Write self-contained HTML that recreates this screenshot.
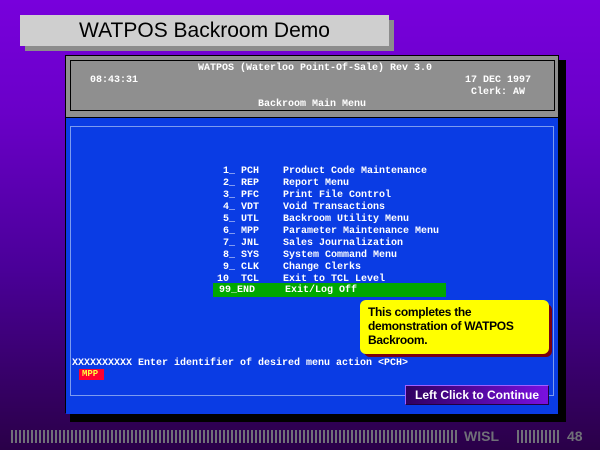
<!DOCTYPE html>
<html><head><style>
*{margin:0;padding:0}
body{width:600px;height:450px;overflow:hidden;position:relative;background:linear-gradient(#7800dc 0%,#6a00c8 25%,#4a0098 60%,#2a0048 100%);font-family:"Liberation Sans",sans-serif}
.a{position:absolute}
.m{font-family:"Liberation Mono",monospace;font-weight:bold;font-size:10px;color:#fff;white-space:pre;line-height:12px}
.bars{background:repeating-linear-gradient(90deg,#707078 0 2px,transparent 2px 4px)}
</style></head><body>
<div class="a" style="left:25px;top:20px;width:369px;height:31px;background:#8c8c8c"></div>
<div class="a" style="left:20px;top:15px;width:369px;height:31px;background:#cfcfcf;font-size:21px;line-height:31px;text-align:center;color:#000">WATPOS Backroom Demo</div>

<div class="a" style="left:70px;top:60px;width:496px;height:362px;background:#000"></div>
<div class="a" style="left:65px;top:55px;width:494px;height:358px;background:#000"></div>
<div class="a" style="left:66px;top:56px;width:492px;height:61px;background:#8f8f8f"></div>
<div class="a" style="left:70px;top:60px;width:483px;height:49px;border:1px solid #000"></div>
<div class="a" style="left:66px;top:118px;width:492px;height:296px;background:#0a3ce4"></div>
<div class="a" style="left:70px;top:126px;width:482px;height:268px;border:1px solid #7c9cf0"></div>

<div class="a m" style="left:198px;top:63px">WATPOS (Waterloo Point-Of-Sale) Rev 3.0</div>
<div class="a m" style="left:90px;top:75px">08:43:31</div>
<div class="a m" style="left:465px;top:75px">17 DEC 1997</div>
<div class="a m" style="left:471px;top:87px">Clerk: AW</div>
<div class="a m" style="left:258px;top:99px">Backroom Main Menu</div>

<div class="a" style="left:213px;top:283px;width:233px;height:14px;background:#00a800"></div>
<div class="a m" style="left:217px;top:166px"> 1_ PCH    Product Code Maintenance
 2_ REP    Report Menu
 3_ PFC    Print File Control
 4_ VDT    Void Transactions
 5_ UTL    Backroom Utility Menu
 6_ MPP    Parameter Maintenance Menu
 7_ JNL    Sales Journalization
 8_ SYS    System Command Menu
 9_ CLK    Change Clerks
10  TCL    Exit to TCL Level
</div>
<div class="a m" style="left:219px;top:285px">99_END     Exit/Log Off</div>

<div class="a" style="left:364px;top:304px;width:188px;height:53px;background:#7a0010;border-radius:6px"></div>
<div class="a" style="left:360px;top:300px;width:189px;height:54px;background:#ffff00;border-radius:6px;font-size:12px;font-weight:bold;line-height:14px;color:#000;padding:5px 0 0 8px;box-sizing:border-box;letter-spacing:-0.3px">This completes the<br>demonstration of WATPOS<br>Backroom.</div>

<div class="a m" style="left:72px;top:358px">XXXXXXXXXX Enter identifier of desired menu action &lt;PCH&gt;</div>
<div class="a" style="left:79px;top:369px;width:25px;height:11px;background:#ff0030"></div>
<div class="a m" style="left:82px;top:368px;color:#ffff40;font-size:9px">MPP</div>

<div class="a" style="left:405px;top:385px;width:144px;height:20px;background:linear-gradient(90deg,#300060,#7a10e0);border:1px solid #a060ff;border-bottom-color:#200040;border-right-color:#200040;box-sizing:border-box;color:#fff;font-size:12px;font-weight:bold;line-height:18px;text-align:center">Left Click to Continue</div>

<div class="a bars" style="left:11px;top:430px;width:448px;height:13px"></div>
<div class="a" style="left:464px;top:428px;font-size:14px;font-weight:bold;color:#707078;line-height:16px">WISL</div>
<div class="a bars" style="left:517px;top:430px;width:44px;height:13px"></div>
<div class="a" style="left:567px;top:428px;font-size:14px;font-weight:bold;color:#707078;line-height:16px">48</div>
</body></html>
